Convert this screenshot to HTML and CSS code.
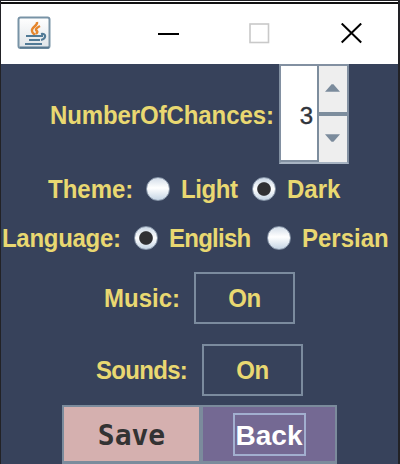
FILE: index.html
```html
<!DOCTYPE html>
<html lang="en">
<head>
<meta charset="utf-8">
<title>Settings</title>
<link rel="stylesheet" href="styles.css">
</head>
<body>
<div class="window">
  <header class="titlebar">
    <svg class="java" viewBox="0 0 34 34">
      <defs><linearGradient id="tile" x2="0" y2="1"><stop stop-color="#fff"/><stop offset="1" stop-color="#dfe4e8"/></linearGradient></defs>
      <rect x="1.500" y="1.500" width="31" height="30.500" rx="2" fill="url(#tile)" stroke="#7893a6" stroke-width="2"/>
      <path d="M3 31.500h29" fill="none" stroke="#587890" stroke-width="2"/>
      <path d="M20 6c1 4-6 5-5 9 0 2 2 3 3 4M23 10c-4 2-5 4-3 5 1 1 0 2-1 3" fill="none" stroke="#e5862d" stroke-width="2.400"/>
      <path d="M9 20h17M12 24h11M8 28h17M24 18c6-1 5 5 0 6" fill="none" stroke="#517a96" stroke-width="2.200"/>
    </svg>
    <svg class="min" viewBox="0 0 21 22"><path d="M0 11h21" stroke="#000" stroke-width="2"/></svg>
    <svg class="max" viewBox="0 0 21 22"><rect x="1" y="1" width="18.500" height="18.500" fill="none" stroke="#c9c9c9" stroke-width="1.6"/></svg>
    <svg class="close" viewBox="0 0 21 22"><path d="M.7 .5l19.500 19M20.200 .5L.7 19.500" stroke="#000" stroke-width="2"/></svg>
  </header>
  <main>
    <div class="row chances">
      <span class="label">NumberOfChances:</span>
      <div class="spinner">
        <div class="value">3</div>
        <div class="arrows">
          <div class="arrow"><svg viewBox="0 0 16 8"><path d="M0 8L7 0h2l7 8z" fill="#7b8b9c"/></svg></div>
          <div class="arrow"><svg viewBox="0 0 16 8"><path d="M0 0h16L9 8H7z" fill="#7b8b9c"/></svg></div>
        </div>
      </div>
    </div>
    <div class="row theme">
      <span class="label">Theme:</span>
      <i class="radio"></i><span class="label">Light</span>
      <i class="radio on"></i><span class="label">Dark</span>
    </div>
    <div class="row language">
      <span class="label">Language:</span>
      <i class="radio on"></i><span class="label">English</span>
      <i class="radio"></i><span class="label">Persian</span>
    </div>
    <div class="row music"><span class="label">Music:</span><div class="toggle"><span class="label">On</span></div></div>
    <div class="row sounds"><span class="label">Sounds:</span><div class="toggle"><span class="label">On</span></div></div>
    <div class="actions">
      <div class="save">Save</div>
      <div class="back"><span>Back</span></div>
    </div>
  </main>
</div>
</body>
</html>
```
FILE: styles.css
```css
* { box-sizing: border-box; }
body {
  margin: 0;
  height: 464px;
  overflow: hidden;
  background: #222226;
  font: bold 24px/28px "Liberation Sans", Arial, sans-serif;
}
.window {
  height: 464px;
  margin: 0 2px 0 1px;
  border-top: 1px solid #222226;
  background: #37425b;
}
.titlebar {
  display: flex;
  align-items: center;
  height: 63px;
  padding-top: 3px;
  background: linear-gradient(#fff 0 1px, #111 1px 3px, #fff 3px);
}
.titlebar svg { flex: none; width: 21px; height: 22px; }
.titlebar .java { width: 34px; height: 34px; margin: -3px 0 0 16px; }
.titlebar .min { margin: -1px 70px 0 107px; }
.titlebar .max { margin-right: 71px; }
.row { display: flex; align-items: center; }
.label {
  flex: none;
  color: #e9d871;
  white-space: nowrap;
  transform: scaleY(1.07);
}
.chances { height: 101px; padding-left: 49px; align-items: flex-start; }
.chances > .label { width: 229px; margin-top: 37px; letter-spacing: -.1px; }
.spinner {
  display: flex;
  width: 70px;
  height: 100px;
  border: 2px solid #8290a1;
  border-bottom-color: #a7b3c2;
}
.value {
  width: 36px;
  padding: 36px 4px 0 0;
  background: #fff;
  border-bottom: 2px solid #8290a1;
  color: #30343b;
  text-align: right;
  font-weight: normal;
  -webkit-text-stroke: .4px #30343b;
}
.arrows {
  display: grid;
  grid-template-rows: 46px 46px;
  gap: 4px;
  width: 30px;
  background: #7d8d9d;
  border-left: 2px solid #7d8d9d;
}
.arrow { background: #eee; padding: 18px 0 0 6px; }
.arrow svg { display: block; width: 15px; height: 8px; }
.radio {
  flex: none;
  width: 24px;
  height: 24px;
  border-radius: 50%;
  border: 1px solid #8795a8;
  background: linear-gradient(#d3dde9, #fff 45%, #c5d5e5);
}
.radio.on {
  background: radial-gradient(circle, #303033 0 6.300px, transparent 7.300px), linear-gradient(#cbd8e6, #fff 50%, #c5d5e5);
}
.theme { height: 48px; padding-left: 47px; }
.theme .label:nth-child(1) { width: 98px; }
.theme .label:nth-child(3) { width: 71px; margin-left: 11px; letter-spacing: -.4px; }
.theme .label:nth-child(5) { margin-left: 11px; }
.language { height: 49px; padding-left: 1px; }
.language .label:nth-child(1) { width: 132px; letter-spacing: -.3px; }
.language .label:nth-child(3) { width: 98px; margin-left: 11px; letter-spacing: -.75px; }
.language .label:nth-child(5) { margin-left: 11px; }
.toggle {
  display: flex;
  align-items: center;
  justify-content: center;
  width: 101px;
  height: 52px;
  border: 2px solid #7b8b9e;
}
.music { height: 72px; padding-left: 103px; }
.music > .label { width: 90px; }
.sounds { height: 72px; padding-left: 95px; }
.sounds > .label { width: 106px; letter-spacing: -.7px; }
.toggle .label { letter-spacing: -.5px; }
.actions {
  display: flex;
  width: 275px;
  height: 59px;
  margin: -1px 0 0 61px;
  border: 2px solid #7b8b9c;
  border-bottom-width: 3px;
  font-size: 28px;
  line-height: 34px;
}
.save {
  width: 137px;
  padding-top: 12px;
  border-right: 2px solid #7b8b9c;
  background: #d5b0af;
  color: #333;
  text-align: center;
  font-family: "DejaVu Sans Mono", monospace;
}
.back {
  flex: 1;
  display: flex;
  justify-content: center;
  align-items: flex-start;
  padding-top: 6px;
  border-left: 2px solid #7b8b9c;
  background: #746993;
  color: #fff;
}
.back span {
  width: 73px;
  height: 43px;
  padding-top: 4px;
  border: 2px solid #a2afcf;
  text-align: center;
}
```
